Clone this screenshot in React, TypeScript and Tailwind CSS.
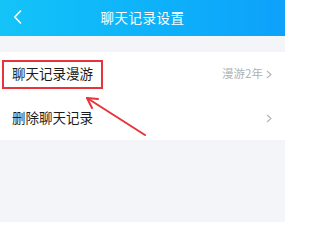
import React from "react";

export default function App() {
  return (
    <div
      className="relative w-[285px] h-[222px] bg-[#f3f5f9] overflow-hidden"
      style={{ fontFamily: '"Noto Sans CJK SC", "Noto Sans", sans-serif' }}
    >
      <div className="h-[36px] bg-gradient-to-r from-[#14c4f8] to-[#0ea1fb] flex items-center relative">
        <svg className="absolute left-[13px] top-[10px]" width="9" height="14" viewBox="0 0 9 14">
          <path d="M7.5 1 L1.8 7 L7.5 13" fill="none" stroke="white" strokeWidth="1.6" strokeLinecap="round" strokeLinejoin="round" />
        </svg>
        <div className="flex-1 text-center text-white text-[13.5px] leading-none tracking-[0.5px]">聊天记录设置</div>
      </div>
      <div className="h-[16px]" />
      <div className="bg-white">
        <div className="h-[44px] flex items-center pl-[12px] pr-[13px]">
          <div className="flex-1 text-[13.5px] text-[#1b1b1b] leading-none">聊天记录漫游</div>
          <div className="text-[11.5px] text-[#aeb1b5] leading-none">漫游2年</div>
          <svg className="ml-[3px]" width="6" height="9" viewBox="0 0 6 9">
            <path d="M1 1 L5 4.5 L1 8" fill="none" stroke="#b2b5b9" strokeWidth="1.1" />
          </svg>
        </div>
        <div className="h-[44px] flex items-center pl-[12px] pr-[13px]">
          <div className="flex-1 text-[13.5px] text-[#1b1b1b] leading-none">删除聊天记录</div>
          <svg width="6" height="9" viewBox="0 0 6 9">
            <path d="M1 1 L5 4.5 L1 8" fill="none" stroke="#b2b5b9" strokeWidth="1.1" />
          </svg>
        </div>
      </div>
      <div className="absolute left-[2px] top-[60px] w-[101px] h-[29px] border-2 border-[#e8333a]" />
      <svg className="absolute left-0 top-0" width="285" height="222" viewBox="0 0 285 222">
        <path d="M145 135 L87 98" stroke="#e8333a" strokeWidth="2" strokeLinecap="round" />
        <path d="M98 99 L87 98 L92 108" fill="none" stroke="#e8333a" strokeWidth="2" strokeLinecap="round" strokeLinejoin="round" />
      </svg>
    </div>
  );
}
